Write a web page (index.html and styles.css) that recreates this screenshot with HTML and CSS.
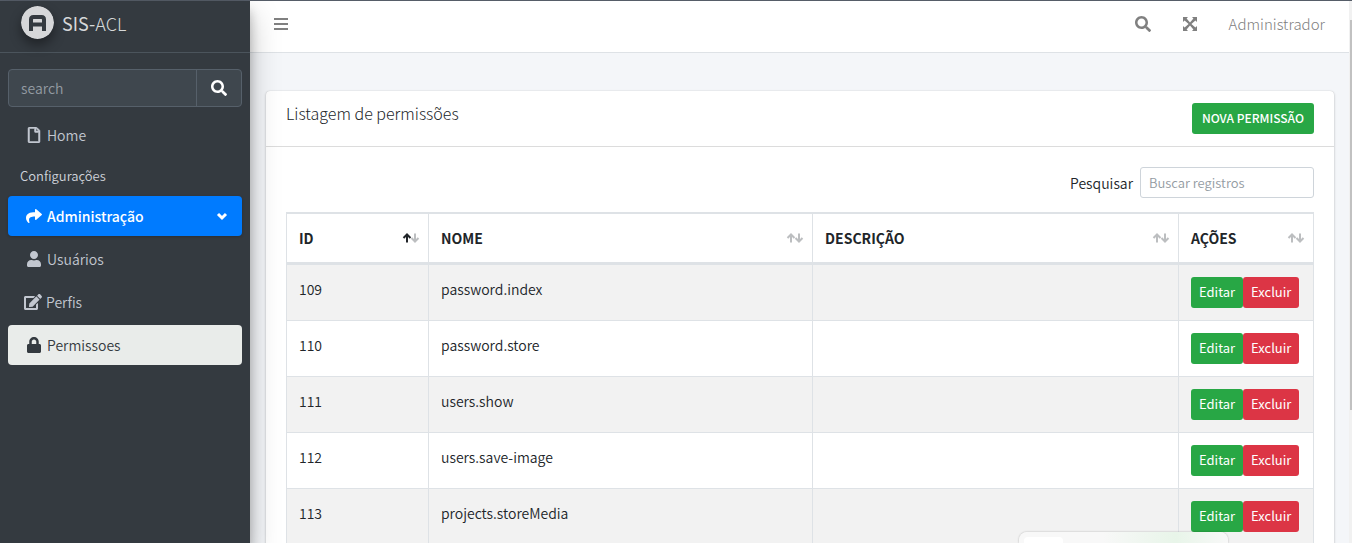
FILE: index.html
```html
<!DOCTYPE html>
<html lang="pt-BR">
<head>
<meta charset="utf-8">
<title>SIS-ACL</title>
<link rel="stylesheet" href="styles.css">
</head>
<body>
<svg class="defs" aria-hidden="true">
  <symbol id="search" viewBox="0 0 512 512"><path d="M505 442.7L405.3 343c-4.5-4.5-10.6-7-17-7H372c27.6-35.3 44-79.7 44-128C416 93.1 322.9 0 208 0S0 93.1 0 208s93.1 208 208 208c48.3 0 92.7-16.4 128-44v16.3c0 6.4 2.5 12.5 7 17l99.7 99.7c9.4 9.4 24.6 9.4 33.9 0l28.3-28.3c9.4-9.4 9.4-24.6.1-34zM208 336c-70.7 0-128-57.2-128-128 0-70.7 57.2-128 128-128 70.7 0 128 57.2 128 128 0 70.7-57.2 128-128 128z"/></symbol>
  <symbol id="sort" viewBox="0 0 18 10"><path class="up" d="M5 9.500V2M1.500 5L5 1.500 8.500 5"/><path class="down" d="M13 .5V8M9.500 5L13 8.500 16.500 5"/></symbol>
</svg>
<div class="app">
  <aside class="sidebar">
    <a class="brand" href="#">
      <svg class="logo" viewBox="0 0 33 33" aria-hidden="true"><circle cx="16.500" cy="16.500" r="16.500" fill="#d6d7d9"/><path d="M10 25V13.500Q10 11 12.500 11H20.500Q23 11 23 13.500V25M10 18.500H23" fill="none" stroke="#343a40" stroke-width="4"/></svg>
      <span><b>SIS-</b>ACL</span>
    </a>
    <div class="side-body">
      <form class="side-search">
        <input type="search" placeholder="search" aria-label="search">
        <button type="button" aria-label="Pesquisar no menu"><svg class="icon"><use href="#search"/></svg></button>
      </form>
      <nav class="menu">
        <a href="#"><svg class="icon outline" viewBox="-64 0 512 512"><path d="M369.900 97.900L286 14C277 5 264.800-.1 252.100-.1H48C21.500 0 0 21.500 0 48v416c0 26.500 21.500 48 48 48h288c26.500 0 48-21.500 48-48V131.900c0-12.700-5.100-25-14.100-34zM332.100 128H256V51.900l76.100 76.100zM48 464V48h160v104c0 13.300 10.700 24 24 24h104v288H48z"/></svg>Home</a>
        <p class="menu-header">Configurações</p>
        <a class="open" href="#"><svg class="icon" viewBox="0 0 512 512"><path d="M503.691 189.836L327.687 37.851C312.281 24.546 288 35.347 288 56.015v80.053C127.371 137.907 0 170.100 0 322.326c0 61.441 39.581 122.309 83.333 154.132 13.653 9.931 33.111-2.533 28.077-18.631C66.066 312.814 132.917 274.316 288 272.085V360c0 20.700 24.300 31.453 39.687 18.164l176.004-152c11.071-9.562 11.086-26.753 0-36.328z"/></svg>Administração<svg class="chevron" viewBox="0 0 12 12"><path d="M2 4L6 8L10 4"/></svg></a>
        <a href="#"><svg class="icon" viewBox="-32 0 512 512"><path d="M224 256c70.700 0 128-57.300 128-128S294.700 0 224 0 96 57.300 96 128s57.300 128 128 128zm89.600 32h-16.700c-22.200 10.200-46.900 16-72.900 16s-50.600-5.800-72.900-16h-16.700C60.200 288 0 348.200 0 422.400V464c0 26.500 21.500 48 48 48h352c26.500 0 48-21.500 48-48v-41.600c0-74.200-60.200-134.400-134.400-134.400z"/></svg>Usuários</a>
        <a class="tight" href="#"><svg class="icon wide" viewBox="0 0 576 512"><path d="M402.600 83.200l90.200 90.200c3.800 3.800 3.800 10 0 13.800L274.400 405.600l-92.800 10.300c-12.400 1.400-22.900-9.100-21.500-21.500l10.300-92.800L388.800 83.200c3.800-3.800 10-3.800 13.800 0zm162-22.900l-48.800-48.800c-15.200-15.200-39.900-15.200-55.200 0l-35.400 35.400c-3.800 3.800-3.800 10 0 13.800l90.200 90.200c3.800 3.800 10 3.800 13.800 0l35.400-35.400c15.200-15.300 15.200-40 0-55.200zM384 346.200V448H64V128h229.800c3.200 0 6.200-1.300 8.500-3.500l40-40c7.600-7.600 2.200-20.500-8.500-20.500H48C21.500 64 0 85.500 0 112v352c0 26.500 21.500 48 48 48h352c26.500 0 48-21.500 48-48V306.200c0-10.700-12.900-16-20.500-8.500l-40 40c-2.200 2.300-3.500 5.300-3.500 8.500z"/></svg>Perfis</a>
        <a class="current" href="#"><svg class="icon" viewBox="-32 0 512 512"><path d="M400 224h-24v-72C376 68.200 307.800 0 224 0S72 68.200 72 152v72H48c-26.500 0-48 21.500-48 48v192c0 26.500 21.500 48 48 48h352c26.500 0 48-21.500 48-48V272c0-26.500-21.500-48-48-48zm-104 0H152v-72c0-39.700 32.300-72 72-72s72 32.300 72 72v72z"/></svg>Permissoes</a>
      </nav>
    </div>
  </aside>
  <div class="main">
    <header class="topbar">
      <button class="toggle" type="button" aria-label="Menu"><svg class="icon" viewBox="0 0 16 16"><path d="M1 2h14v2H1zM1 7h14v2H1zM1 12h14v2H1z"/></svg></button>
      <div class="tools">
        <button type="button" aria-label="Buscar"><svg class="icon"><use href="#search"/></svg></button>
        <button type="button" aria-label="Tela cheia"><svg class="icon" viewBox="0 0 16 16"><path d="M1 1h5L4.600 2.600 8 6.600l3.400-4L10 1h5v5l-1.600-1.400L9.400 8l4 3.400L15 10v5h-5l1.400-1.600L8 9.400l-3.400 4L6 15H1v-5l1.600 1.400L6.600 8 2.600 4.600 1 6z"/></svg></button>
        <a href="#">Administrador</a>
      </div>
    </header>
    <main class="content">
      <section class="card">
        <header class="card-header">
          <h1>Listagem de permissões</h1>
          <button class="btn green new" type="button">NOVA PERMISSÃO</button>
        </header>
        <div class="card-body">
          <div class="filter"><label for="filter">Pesquisar</label><input id="filter" type="search" placeholder="Buscar registros"></div>
          <table>
            <colgroup><col class="c-id"><col class="c-name"><col class="c-desc"><col class="c-act"></colgroup>
            <thead><tr>
              <th><div class="th">ID<svg class="sort asc"><use href="#sort"/></svg></div></th>
              <th><div class="th">NOME<svg class="sort"><use href="#sort"/></svg></div></th>
              <th><div class="th">DESCRIÇÃO<svg class="sort"><use href="#sort"/></svg></div></th>
              <th><div class="th">AÇÕES<svg class="sort"><use href="#sort"/></svg></div></th>
            </tr></thead>
            <tbody>
              <tr><td>109</td><td>password.index</td><td></td><td><div class="actions"><button class="btn green" type="button">Editar</button><button class="btn red" type="button">Excluir</button></div></td></tr>
              <tr><td>110</td><td>password.store</td><td></td><td><div class="actions"><button class="btn green" type="button">Editar</button><button class="btn red" type="button">Excluir</button></div></td></tr>
              <tr><td>111</td><td>users.show</td><td></td><td><div class="actions"><button class="btn green" type="button">Editar</button><button class="btn red" type="button">Excluir</button></div></td></tr>
              <tr><td>112</td><td>users.save-image</td><td></td><td><div class="actions"><button class="btn green" type="button">Editar</button><button class="btn red" type="button">Excluir</button></div></td></tr>
              <tr><td>113</td><td>projects.storeMedia</td><td></td><td><div class="actions"><button class="btn green" type="button">Editar</button><button class="btn red" type="button">Excluir</button></div></td></tr>
            </tbody>
          </table>
        </div>
      </section>
    </main>
  </div>
  <div class="scroll"><div class="thumb"></div></div>
</div>
<div class="popup"><div class="popup-tab"></div></div>
</body>
</html>
```
FILE: styles.css
```css
* { box-sizing: border-box; }
body {
  margin: 0;
  overflow: hidden;
  background: #f4f6f9;
  color: #212529;
  font: 350 14px/24px "Noto Sans CJK JP", "Noto Sans", sans-serif;
}
button, input { font: inherit; margin: 0; }
button { border: 0; background: none; cursor: pointer; }
a { color: inherit; text-decoration: none; }
.defs { position: absolute; width: 0; height: 0; }
.icon { width: 16px; height: 16px; fill: currentColor; flex: none; display: block; }
.icon.wide { width: 18px; }
.icon.outline { stroke: currentColor; stroke-width: 16; }

.app { display: flex; height: 100vh; border-top: 1px solid #565d68; }

.sidebar {
  flex: 0 0 250px;
  background: #343a40;
  color: #c2c7d0;
  box-shadow: 0 14px 28px rgba(0, 0, 0, .25), 0 10px 10px rgba(0, 0, 0, .22);
  z-index: 2;
}
.brand {
  display: flex;
  align-items: center;
  gap: 8px;
  height: 52px;
  padding: 0 21px 8px;
  border-bottom: 1px solid #4b545c;
  color: #d6d8d9;
  font-size: 18px;
  font-weight: 300;
}
.brand b { font-weight: 400; }
.logo { width: 33px; height: 33px; border-radius: 50%; box-shadow: 0 6px 12px rgba(0, 0, 0, .4); }
.side-body { padding: 16px 8px; }
.side-search { display: flex; height: 38px; margin-bottom: 8px; border: 1px solid #56606a; border-radius: 4px; background: #3f474e; }
.side-search input { flex: 1; min-width: 0; padding: 0 12px; border: 0; background: none; color: #fff; }
.side-search input::placeholder { color: #939ba2; opacity: 1; }
.side-search button { width: 45px; padding: 0 14px; border-left: 1px solid #56606a; color: #fff; }
.menu { display: flex; flex-direction: column; gap: 3px; }
.menu a { display: flex; align-items: center; gap: 5px; height: 40px; padding: 0 14px 0 18px; border-radius: 4px; }
.menu a.tight { gap: 4px; padding-left: 16px; }
.menu-header { margin: 0; padding: 6px 12px 5px; font-size: 13px; color: #d0d4db; }
.menu .open { background: #007bff; color: #fff; font-weight: 500; box-shadow: 0 1px 3px rgba(0, 0, 0, .2); }
.menu .current { background: #e9ecea; color: #343a40; }
.chevron { width: 12px; height: 12px; margin-left: auto; fill: none; stroke: currentColor; stroke-width: 3; }

.main { flex: 1; min-width: 0; display: flex; flex-direction: column; }
.topbar { display: flex; flex: none; justify-content: space-between; align-items: center; height: 52px; padding: 0 24px 6px 23px; background: #fff; border-bottom: 1px solid #dee2e6; color: #808080; }
.topbar button { padding: 0; color: inherit; }
.tools { display: flex; align-items: center; gap: 31px; }
.tools a { font-size: 15px; font-weight: 300; }
.content { padding: 38px 15px 0 16px; }
.card { background: #fff; border-radius: 4px; box-shadow: 0 0 1px rgba(0, 0, 0, .2), 0 1px 3px rgba(0, 0, 0, .2); }
.card-header { display: flex; justify-content: space-between; align-items: flex-start; padding: 12px 20px; border-bottom: 1px solid #dcdcdc; }
h1 { margin: 0; font-size: 16px; line-height: 20px; font-weight: 300; }
.btn { height: 31px; padding: 0 8px 2px; border-radius: 3px; color: #fff; font-size: 13px; font-weight: 400; line-height: 21px; white-space: nowrap; }
.new { padding: 0 10px 2px; font-size: 12px; font-weight: 500; }
.green { background: #28a745; }
.red { background: #dc3545; }
.card-body { padding: 20px; }
.filter { display: flex; justify-content: flex-end; align-items: center; gap: 7px; margin-bottom: 14px; }
.filter input { width: 174px; height: 31px; padding: 0 8px; border: 1px solid #ced4da; border-radius: 3px; font-size: 13px; }
.filter input::placeholder { color: #939ba2; opacity: 1; }

table { width: 100%; table-layout: fixed; border-collapse: collapse; }
.c-id { width: 142px; }
.c-name { width: 37.4%; }
.c-act { width: 135px; }
th, td { border: 1px solid #dee2e6; padding: 12px; text-align: left; vertical-align: top; }
th { padding-right: 8px; border-top-width: 2px; border-bottom-width: 3px; font-weight: 700; }
.th { display: flex; justify-content: space-between; align-items: center; }
td { height: 56px; }
tbody tr:nth-child(odd) { background: #f2f2f2; }
.actions { display: flex; }
.sort { width: 18px; height: 10px; fill: none; stroke: #bcbec0; stroke-width: 2; }
.asc { --up: #212529; }
.up { stroke: var(--up, #bcbec0); }

.scroll { flex: 0 0 3px; background: #f1f1f1; padding-top: 19px; }
.thumb { height: 390px; margin-left: 1px; background: #c1c1c1; }
.popup { position: fixed; right: 124px; bottom: 0; width: 209px; height: 11px; border-radius: 8px 8px 0 0; background: linear-gradient(90deg, #f8f8f8 40%, #e8f5e9 75%, #f8f8f8); box-shadow: 0 0 2px rgba(0, 0, 0, .3); }
.popup-tab { width: 39px; height: 6px; margin: 5px; background: #fff; border-radius: 4px 4px 0 0; }
```
